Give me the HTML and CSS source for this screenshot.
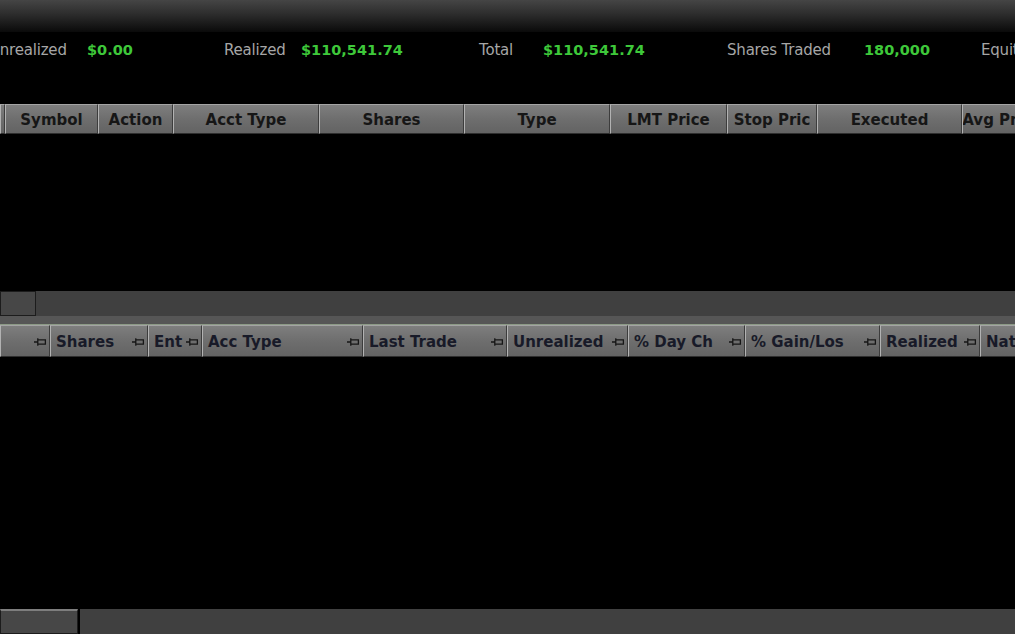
FILE: index.html
```html
<!doctype html>
<html lang="en">
    <head>
        <meta charset="UTF-8" />
        <title>Account Summary</title>
        <link rel="stylesheet" href="styles.css">
    </head>
    <body>
        <div class="screen">
            <div class="topbar"></div>

            <div class="stats">
                <span class="label w-unreal">Unrealized</span>
                <span class="value w-unreal-v">$0.00</span>
                <span class="label w-real">Realized</span>
                <span class="value w-real-v">$110,541.74</span>
                <span class="label w-total">Total</span>
                <span class="value w-total-v">$110,541.74</span>
                <span class="label w-traded">Shares Traded</span>
                <span class="value w-traded-v">180,000</span>
                <span class="label">Equity</span>
            </div>

            <div class="orders">
                <div class="head head-orders">
                    <div class="cell" style="width:5px"></div>
                    <div class="cell" style="width:93px">Symbol</div>
                    <div class="cell" style="width:75px">Action</div>
                    <div class="cell" style="width:146px">Acct Type</div>
                    <div class="cell" style="width:145px">Shares</div>
                    <div class="cell" style="width:146px">Type</div>
                    <div class="cell" style="width:117px">LMT Price</div>
                    <div class="cell" style="width:90px">Stop Pric</div>
                    <div class="cell" style="width:145px">Executed</div>
                    <div class="cell" style="width:80px">Avg Price</div>
                </div>
                <div class="rows rows-orders"></div>
                <div class="hscroll">
                    <div class="thumb thumb-orders"></div>
                    <div class="track"></div>
                </div>
            </div>

            <div class="band"></div>

            <div class="positions">
                <div class="head head-positions">
                    <div class="cell pcell" style="width:50px"><span></span><svg class="pin" viewBox="0 0 12 9"><path d="M0 4.5H3M3.5 1V8M3.5 2.5H10.5V6.5H3.5" /></svg></div>
                    <div class="cell pcell" style="width:98px"><span>Shares</span><svg class="pin" viewBox="0 0 12 9"><path d="M0 4.5H3M3.5 1V8M3.5 2.5H10.5V6.5H3.5" /></svg></div>
                    <div class="cell pcell" style="width:54px"><span>Ent</span><svg class="pin" viewBox="0 0 12 9"><path d="M0 4.5H3M3.5 1V8M3.5 2.5H10.5V6.5H3.5" /></svg></div>
                    <div class="cell pcell" style="width:161px"><span>Acc Type</span><svg class="pin" viewBox="0 0 12 9"><path d="M0 4.5H3M3.5 1V8M3.5 2.5H10.5V6.5H3.5" /></svg></div>
                    <div class="cell pcell" style="width:144px"><span>Last Trade</span><svg class="pin" viewBox="0 0 12 9"><path d="M0 4.5H3M3.5 1V8M3.5 2.5H10.5V6.5H3.5" /></svg></div>
                    <div class="cell pcell" style="width:121px"><span>Unrealized</span><svg class="pin" viewBox="0 0 12 9"><path d="M0 4.5H3M3.5 1V8M3.5 2.5H10.5V6.5H3.5" /></svg></div>
                    <div class="cell pcell" style="width:117px"><span>% Day Ch</span><svg class="pin" viewBox="0 0 12 9"><path d="M0 4.5H3M3.5 1V8M3.5 2.5H10.5V6.5H3.5" /></svg></div>
                    <div class="cell pcell" style="width:135px"><span>% Gain/Los</span><svg class="pin" viewBox="0 0 12 9"><path d="M0 4.5H3M3.5 1V8M3.5 2.5H10.5V6.5H3.5" /></svg></div>
                    <div class="cell pcell" style="width:100px"><span>Realized</span><svg class="pin" viewBox="0 0 12 9"><path d="M0 4.5H3M3.5 1V8M3.5 2.5H10.5V6.5H3.5" /></svg></div>
                    <div class="cell pcell" style="width:80px"><span>Native</span></div>
                </div>
                <div class="rows rows-positions"></div>
                <div class="hscroll">
                    <div class="thumb thumb-positions"></div>
                    <div class="track"></div>
                </div>
            </div>
        </div>
    </body>
</html>
```

FILE: styles.css
```css
* {
    margin: 0;
    padding: 0;
    box-sizing: border-box;
}

body {
    background: #000;
    font-family: "DejaVu Sans", Verdana, sans-serif;
    overflow: hidden;
}

.screen {
    width: 1015px;
    height: 634px;
    overflow: hidden;
    display: flex;
    flex-direction: column;
}

.topbar {
    height: 32px;
    flex: none;
    background: linear-gradient(180deg, #454545 0%, #2c2c2c 45%, #0a0a0a 100%);
}

/* summary line */
.stats {
    height: 34px;
    flex: none;
    display: flex;
    align-items: center;
    margin-top: 1px;
    margin-left: -11px;
    white-space: nowrap;
}

.stats span {
    flex: none;
}

.label {
    font-size: 15px;
    color: #a6a6a6;
    letter-spacing: -0.2px;
}

.value {
    font-size: 14.5px;
    font-weight: bold;
    color: #3ec83a;
}

.w-unreal { width: 98px; }
.w-unreal-v { width: 137px; }
.w-real { width: 77px; }
.w-real-v { width: 178px; }
.w-total { width: 64px; }
.w-total-v { width: 184px; }
.w-traded { width: 137px; }
.w-traded-v { width: 117px; }

/* grids */
.orders {
    margin-top: 37px;
    flex: none;
}

.head {
    display: flex;
    white-space: nowrap;
    overflow: hidden;
}

.head-orders {
    height: 30px;
}

.head-positions {
    height: 32px;
}

.cell {
    flex: none;
    height: 100%;
    display: flex;
    align-items: center;
    justify-content: center;
    overflow: hidden;
    padding-top: 1px;
    background: linear-gradient(180deg, #7e7e7e 0%, #6e6e6e 50%, #636363 100%);
    border-top: 1px solid #a4a4a4;
    border-left: 1px solid #b2b2b2;
    border-right: 1px solid #3c3c3c;
    border-bottom: 1px solid #2e2e2e;
    font-size: 15px;
    font-weight: bold;
    color: #161616;
}

.pcell {
    justify-content: space-between;
    padding: 1px 2px 0 5px;
    color: #181a28;
}

.pin {
    width: 13px;
    height: 10px;
    flex: none;
    fill: none;
    stroke: #161616;
    stroke-width: 1.2;
}

.rows-orders {
    height: 157px;
}

.rows-positions {
    height: 252px;
}

.hscroll {
    height: 25px;
    display: flex;
    background: #000;
}

.thumb {
    flex: none;
    height: 100%;
    background: #474747;
    border: 1px solid #1c1c1c;
}

.thumb-orders {
    width: 36px;
}

.thumb-positions {
    width: 78px;
    border-top: 2px solid #7e7e7e;
}

.track {
    flex: 1;
    background: #404040;
}

.thumb-positions + .track {
    margin-left: 2px;
}

.band {
    height: 9px;
    flex: none;
    background: #565656;
    border-bottom: 1px solid #8c9a86;
}

.positions {
    flex: none;
}
```
